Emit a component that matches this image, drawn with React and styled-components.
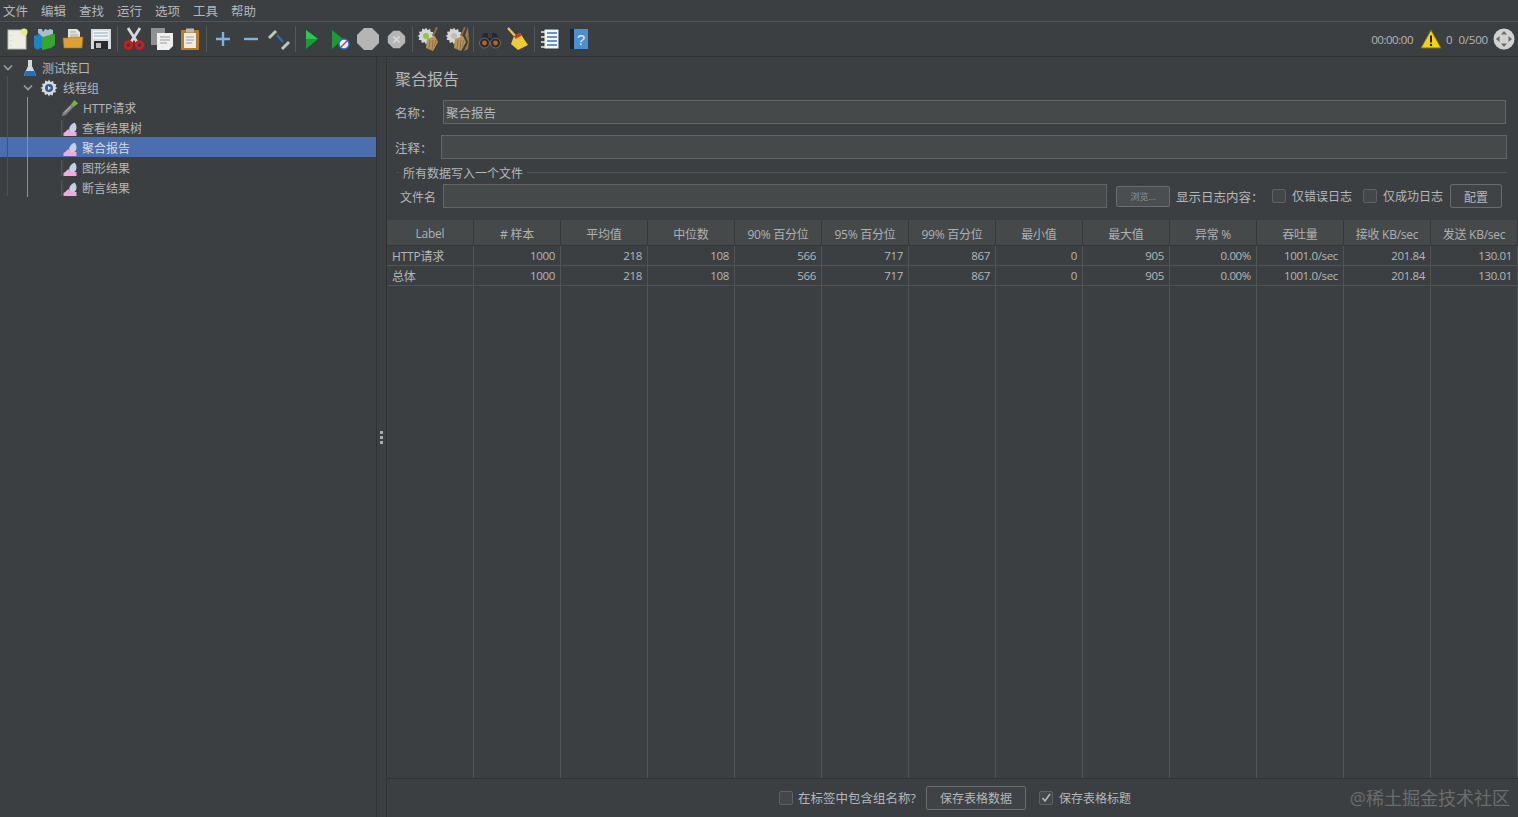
import React from "react";
import styled, { createGlobalStyle } from "styled-components";

const GlobalStyle = createGlobalStyle`
  html, body { margin: 0; padding: 0; height: 100%; background: #3c3f41; overflow: hidden; }
  #root { height: 100%; }
  * { box-sizing: border-box; }
`;

const FONT = `"Open Sans", "Noto Sans CJK SC", sans-serif`;

const Window = styled.div`
  height: 817px;
  display: flex;
  flex-direction: column;
  background: #3c3f41;
  color: #b4b7b9;
  font-family: ${FONT};
  font-size: 12px;
  position: relative;
  overflow: hidden;
`;

const MenuBar = styled.div`
  height: 22px;
  display: flex;
  align-items: center;
  gap: 13px;
  padding-left: 3px;
  font-size: 12.5px;
  border-bottom: 1px solid #515354;
`;

const ToolBar = styled.div`
  height: 35px;
  display: flex;
  align-items: center;
  padding: 0 3px;
  border-bottom: 1px solid #323232;
`;

const ToolButton = styled.div`
  width: 28px;
  height: 28px;
  display: flex;
  align-items: center;
  justify-content: center;
`;

const ToolSep = styled.div`
  width: 5px;
  height: 26px;
  display: flex;
  justify-content: center;
  &::before {
    content: "";
    width: 1px;
    background: #555759;
  }
`;

const Status = styled.div`
  margin-left: auto;
  display: flex;
  align-items: center;
  font-size: 11.5px;
`;

const StatusText = styled.span`
  display: flex;
  margin-left: ${(p) => p.$gap || 0}px;
  letter-spacing: ${(p) => p.$tight || -0.2}px;
`;

const Body = styled.div`
  flex: 1;
  display: flex;
  min-height: 0;
`;

const Tree = styled.div`
  width: 377px;
  position: relative;
  border-right: 1px solid #323232;
`;

const TreeRow = styled.div`
  height: 20px;
  display: flex;
  align-items: center;
  padding-top: 2px;
  padding-left: ${(p) => p.$indent}px;
  background: ${(p) => (p.$selected ? "#4b6eaf" : "transparent")};
  color: ${(p) => (p.$selected ? "#d6dbe4" : "#b4b7b9")};
  font-size: 12px;
`;

const Chevron = styled.svg`
  width: 10px;
  height: 8px;
  margin-right: 7px;
  flex: none;
`;

const TreeIcon = styled.span`
  width: 18px;
  height: 18px;
  margin-left: ${(p) => p.$shift || 0}px;
  margin-right: ${(p) => p.$gap}px;
  display: flex;
  align-items: center;
  justify-content: center;
  flex: none;
`;

const TreeGuide = styled.div`
  position: absolute;
  left: ${(p) => p.$left}px;
  top: ${(p) => p.$top}px;
  height: ${(p) => p.$height}px;
  width: 1px;
  background: ${(p) => p.$color};
`;

const Splitter = styled.div`
  width: 10px;
  display: flex;
  flex-direction: column;
  align-items: center;
  justify-content: center;
  gap: 2px;
  padding-right: 1px;
  border-right: 1px solid #323232;
`;

const SplitDot = styled.span`
  width: 3px;
  height: 3px;
  background: #a9abad;
`;

const Main = styled.div`
  flex: 1;
  min-width: 0;
  display: flex;
  flex-direction: column;
  padding-top: 10px;
`;

const Form = styled.div`
  padding: 0 11px 0 8px;
`;

const Title = styled.div`
  height: 24px;
  line-height: 24px;
  font-size: 16px;
`;

const FieldRow = styled.div`
  display: flex;
  align-items: center;
  height: 24px;
  margin-top: ${(p) => p.$top}px;
`;

const FieldLabel = styled.label`
  width: ${(p) => p.$width}px;
  padding-left: ${(p) => p.$pad || 0}px;
  padding-top: 1px;
  flex: none;
  font-size: ${(p) => p.$size || 12.5}px;
`;

const TextField = styled.div`
  flex: ${(p) => (p.$fixed ? "none" : 1)};
  width: ${(p) => (p.$fixed ? `${p.$fixed}px` : "auto")};
  height: 24px;
  margin-right: ${(p) => p.$right || 0}px;
  padding: 2px 0 0 2px;
  background: #45494a;
  border: 1px solid #646464;
  line-height: 22px;
  font-size: 12.5px;
`;

const Legend = styled.div`
  height: 25px;
  display: flex;
  align-items: center;
  gap: 4px;
  font-size: 12px;
  padding: 1px 0 0 2px;
  &::before {
    content: "";
    width: 2px;
    height: 1px;
    background: #515354;
  }
  &::after {
    content: "";
    flex: 1;
    height: 1px;
    background: #515354;
  }
`;

const LegendText = styled.span`
  padding-top: 2px;
`;

const Button = styled.div`
  width: ${(p) => p.$width}px;
  height: ${(p) => p.$height || 24}px;
  margin-left: ${(p) => p.$left || 0}px;
  padding-top: 1px;
  flex: none;
  display: flex;
  align-items: center;
  justify-content: center;
  border: 1px solid #6a6d6f;
  border-radius: 2px;
  background: ${(p) => p.$bg || "#3f4345"};
  color: ${(p) => p.$color || "#b4b7b9"};
  font-size: ${(p) => p.$size || 12}px;
`;

const CheckWrap = styled.span`
  display: inline-flex;
  align-items: center;
  margin-left: ${(p) => p.$left}px;
  font-size: ${(p) => p.$size || 12}px;
  white-space: nowrap;
`;

const CheckBox = styled.span`
  width: 14px;
  height: 14px;
  margin-right: ${(p) => p.$gap}px;
  border: 1px solid #5e6163;
  border-radius: 2px;
  background: #43474a;
  display: flex;
  align-items: center;
  justify-content: center;
  flex: none;
`;

const Grid = styled.div`
  flex: 1;
  min-height: 0;
  margin-top: 12px;
  display: grid;
  grid-template-columns: repeat(13, 87px);
  grid-template-rows: 26px 20px 20px 1fr;
  border-bottom: 1px solid #323232;
`;

const HeadCell = styled.div`
  display: flex;
  align-items: center;
  justify-content: center;
  padding-top: 2px;
  background: #45494a;
  border-right: 1px solid #35383a;
  border-bottom: 1px solid #35383a;
  font-size: 12px;
  letter-spacing: -0.25px;
  white-space: nowrap;
  color: #aeb1b3;
`;

const Cell = styled.div`
  display: flex;
  align-items: center;
  justify-content: ${(p) => (p.$left ? "flex-start" : "flex-end")};
  padding: 0 5px;
  border-right: 1px solid #515354;
  border-bottom: ${(p) => (p.$filler ? "none" : "1px solid #515354")};
  font-size: ${(p) => (p.$left ? 12 : 11.5)}px;
  letter-spacing: ${(p) => (p.$left ? -0.2 : -0.35)}px;
  white-space: nowrap;
`;

const BottomBar = styled.div`
  height: 38px;
  display: flex;
  align-items: center;
  justify-content: center;
  padding: 0 0 1px 5px;
`;

const Watermark = styled.div`
  position: absolute;
  right: 8px;
  bottom: 8px;
  font-size: 18px;
  line-height: 22px;
  color: #6a6c6e;
`;

const HEADERS = ["Label", "# 样本", "平均值", "中位数", "90% 百分位", "95% 百分位", "99% 百分位", "最小值", "最大值", "异常 %", "吞吐量", "接收 KB/sec", "发送 KB/sec"];
const VALUES = ["1000", "218", "108", "566", "717", "867", "0", "905", "0.00%", "1001.0/sec", "201.84", "130.01"];

/* toolbar drawings */
const Svg = ({ size = 24, children }) => (
  <svg width={size} height={size} viewBox="0 0 24 24">{children}</svg>
);

const GEAR = "M9 .5l1.500 2.400 2.700-.9.400 2.800 2.800.4-.9 2.700L17.500 9l-2.400 1.500.9 2.700-2.800.4-.4 2.800-2.700-.9L9 17.500l-1.500-2.400-2.700.9-.4-2.800-2.800-.4.9-2.700L.5 9l2.400-1.500-.9-2.700 2.800-.4.4-2.800 2.700.9z";

const NewIcon = () => (
  <Svg>
    <rect x="3" y="3" width="18" height="19" fill="#eeeee4" stroke="#bdbdb0" />
    <circle cx="19" cy="5" r="3.500" fill="#e6eb8c" />
    <path d="M6 8v1M6 13v1M6 18v1" stroke="#c4c4b8" />
  </Svg>
);
const TemplatesIcon = () => (
  <Svg>
    <path d="M1 9l9-3v14l-6 3-3-3z" fill="#1c83c8" />
    <path d="M9 9l13-2v11l-4 3-9 2z" fill="#37a62f" />
    <path d="M5 6V2h4l1 3 2-3 3 1 2-1 3 1v4l-10 3z" fill="#a7bfcb" />
  </Svg>
);
const OpenIcon = () => (
  <Svg>
    <path d="M7 2h9l3 3v10H7z" fill="#e2e2e2" />
    <path d="M9 5h6M9 8h8" stroke="#a9a9a9" />
    <path d="M2 11h6l1-1h13l-1 11H3z" fill="#e0a02f" stroke="#a9741a" strokeWidth=".6" />
  </Svg>
);
const SaveIcon = () => (
  <Svg>
    <path d="M2 2h20v20H2z" fill="#d5dae0" />
    <path d="M4 4h16v8H4z" fill="#f2f4f7" />
    <path d="M5 6h14M5 9h14" stroke="#8fa9c4" />
    <path d="M5 14h14v8H5z" fill="#2a2a2a" />
    <path d="M7 16h5v5H7z" fill="#bcbcbc" />
  </Svg>
);
const CutIcon = () => (
  <Svg>
    <path d="M6 1l9 14M18 1L9 15" stroke="#d5d7d9" strokeWidth="2.800" />
    <circle cx="6.500" cy="18" r="3.400" fill="none" stroke="#d11b1b" strokeWidth="2.800" />
    <circle cx="17.500" cy="18" r="3.400" fill="none" stroke="#d11b1b" strokeWidth="2.800" />
  </Svg>
);
const CopyIcon = () => (
  <Svg>
    <rect x="1" y="1" width="14" height="17" fill="#8f9193" />
    <path d="M7 6h16v13l-4 4H7z" fill="#efefef" />
    <path d="M10 10h10M10 13h10M10 16h7" stroke="#9a9a9a" />
  </Svg>
);
const PasteIcon = () => (
  <Svg>
    <rect x="3" y="3" width="18" height="20" rx="1" fill="#b97c26" />
    <rect x="6" y="6" width="12" height="15" fill="#ececec" />
    <rect x="8" y="1.500" width="8" height="4" fill="#b9b9b9" />
    <path d="M8 10h8M8 13h8M8 16h6" stroke="#a0a0a0" />
  </Svg>
);
const PlusIcon = () => (
  <Svg><path d="M12 5v14M5 12h14" stroke="#7fb2e0" strokeWidth="2.400" /></Svg>
);
const MinusIcon = () => (
  <Svg><path d="M5 12h14" stroke="#7fb2e0" strokeWidth="2.400" /></Svg>
);
const ToggleIcon = () => (
  <Svg>
    <path d="M2 11l7-7" stroke="#b9cbb7" strokeWidth="3" />
    <path d="M10 8l6 7" stroke="#2f6fb3" strokeWidth="2" />
    <path d="M15 22l7-7" stroke="#b9cbb7" strokeWidth="3" />
  </Svg>
);
const PlayIcon = () => (
  <Svg><path d="M6 3l12 9-12 10z" fill="#1a9c35" /><path d="M6 3l12 9H6z" fill="#2fc552" /></Svg>
);
const PlayNoPauseIcon = () => (
  <Svg>
    <path d="M4 3l11 9-11 10z" fill="#1a9c35" />
    <circle cx="16" cy="17" r="5" fill="#e8eef6" stroke="#2c6cc0" strokeWidth="1.400" />
    <path d="M13 20l6-6" stroke="#d03a2a" strokeWidth="1.400" />
  </Svg>
);
const Octagon = "M8 1h8l7 7v8l-7 7H8l-7-7V8z";
const StopIcon = () => (
  <Svg><path d={Octagon} fill="#b5b5b5" /></Svg>
);
const ShutdownIcon = () => (
  <Svg size={19}>
    <path d={Octagon} fill="#b5b5b5" />
    <path d="M8 8l8 8M16 8l-8 8" stroke="#d6d6d6" strokeWidth="2.400" />
  </Svg>
);
const BroomGear = ({ double }) => (
  <Svg>
    <path d={GEAR} fill="#d6d6d6" />
    <circle cx="9" cy="9" r="3" fill={double ? "#bdbdbd" : "#8ec63f"} />
    {double && <path d="M23 0l-3 8 3 7-4 9 4-2 1-8z" fill="#9c7a46" />}
    <path d="M20 0l-4 9" stroke="#8a6a3a" strokeWidth="2" />
    <path d="M10 12l8-3 3 6-5 9-7-3z" fill="#b8935a" />
    <path d="M13 13l-1 9M16 13l-1 10M19 13l-2 7" stroke="#8a6a3a" strokeWidth=".8" />
  </Svg>
);
const BinocularsIcon = () => (
  <Svg>
    <path d="M6 6h4v5h4V6h4l5 10H1z" fill="#26272a" />
    <circle cx="6.500" cy="16" r="5" fill="#2a2a2a" stroke="#6c6c6c" />
    <circle cx="17.500" cy="16" r="5" fill="#2a2a2a" stroke="#6c6c6c" />
    <circle cx="6.500" cy="16" r="2.400" fill="#b8622e" />
    <circle cx="17.500" cy="16" r="2.400" fill="#b8622e" />
  </Svg>
);
const BroomIcon = () => (
  <Svg>
    <path d="M2 1l8 9" stroke="#e5c64d" strokeWidth="2.400" />
    <path d="M8 9l6-3 8 12-10 5-7-6z" fill="#eecb3a" />
    <path d="M8 9l6-3 1.500 2.500-6 3.500z" fill="#c8342b" />
  </Svg>
);
const ListIcon = () => (
  <Svg>
    <rect x="5" y="2" width="15" height="20" fill="#f2f4f6" stroke="#30343a" />
    <path d="M8 6h10M8 10h10M8 14h10M8 18h10" stroke="#3e73b8" strokeWidth="1.400" />
    <path d="M2 5h5M2 10h5M2 15h5M2 20h5" stroke="#e9e9e9" strokeWidth="1.600" />
  </Svg>
);
const HelpIcon = () => (
  <Svg>
    <rect x="3" y="2" width="5" height="20" fill="#1b2430" />
    <rect x="7" y="2" width="14" height="20" fill="#4e8fd0" />
    <text x="14" y="18" fontSize="15" textAnchor="middle" fill="#e4eef8" fontFamily="Liberation Sans, sans-serif">?</text>
  </Svg>
);
const WarningIcon = () => (
  <svg width="22" height="20" viewBox="0 0 22 20">
    <path d="M11 1l10 18H1z" fill="#f4d411" stroke="#77701a" />
    <path d="M11 6.500v7" stroke="#222" strokeWidth="2" />
    <circle cx="11" cy="16" r="1.200" fill="#222" />
  </svg>
);
const GlobeIcon = () => (
  <svg width="22" height="22" viewBox="0 0 22 22">
    <circle cx="11" cy="11" r="10.500" fill="#d2d2d2" />
    <path d="M11 3l3 3.500H8zM11 19l3-3.500H8zM3 11l3.500-3v6zM19 11l-3.500-3v6z" fill="#666a6c" />
  </svg>
);

/* tree drawings */
const FlaskIcon = () => (
  <svg width="14" height="18" viewBox="0 0 14 18">
    <path d="M5 1h4v6l4 9a1 1 0 01-1 1H2a1 1 0 01-1-1l4-9z" fill="#d5d9de" />
    <path d="M3 12h8l2 4a1 1 0 01-1 1H2a1 1 0 01-1-1z" fill="#1f6fc4" />
  </svg>
);
const GearIcon = () => (
  <svg width="18" height="18" viewBox="0 0 18 18">
    <path d={GEAR} fill="#d8dadc" />
    <circle cx="9" cy="9" r="4" fill="#3a5a9a" />
    <path d="M8 7l3 2-3 2z" fill="#d8e4f4" />
  </svg>
);
const PipetteIcon = () => (
  <svg width="20" height="20" viewBox="0 0 20 20">
    <path d="M1 19l1-4 9-9 3 3-9 9z" fill="#7f8385" />
    <path d="M4 15l7-7" stroke="#b9bcbe" />
    <path d="M11 6l4-5 4 4-5 4z" fill="#6fb840" />
  </svg>
);
const ListenerIcon = ({ selected }) => (
  <svg width="18" height="18" viewBox="0 0 18 18">
    {!selected && <path d="M.8 1v16" stroke="#5c5f61" />}
    <path d="M2.500 17v-3c2-.5 3-3 5-4 1 2 3 3 8 3v4z" fill="#f0a9dc" />
    <path d="M13.500 3.500c2 2 2.500 5 1.500 7.500s-4 3-6 1-.5-6 4.500-8.500z" fill="#c3d0e6" />
  </svg>
);

const TOOLBAR = [
  [NewIcon, TemplatesIcon, OpenIcon, SaveIcon],
  [CutIcon, CopyIcon, PasteIcon],
  [PlusIcon, MinusIcon, ToggleIcon],
  [PlayIcon, PlayNoPauseIcon, StopIcon, ShutdownIcon],
  [() => <BroomGear />, () => <BroomGear double />],
  [BinocularsIcon, BroomIcon],
  [ListIcon, HelpIcon],
];

const MENUS = ["文件", "编辑", "查找", "运行", "选项", "工具", "帮助"];

const TREE = [
  { name: "测试接口", indent: 3, open: true, icon: <FlaskIcon />, shift: 1, gap: 3 },
  { name: "线程组", indent: 23, open: true, icon: <GearIcon />, gap: 5 },
  { name: "HTTP请求", indent: 61, icon: <PipetteIcon />, gap: 4 },
  { name: "查看结果树", indent: 61, icon: <ListenerIcon />, gap: 3 },
  { name: "聚合报告", indent: 61, icon: <ListenerIcon selected />, gap: 3, selected: true },
  { name: "图形结果", indent: 61, icon: <ListenerIcon />, gap: 3 },
  { name: "断言结果", indent: 61, icon: <ListenerIcon />, gap: 3 },
];

const Tick = () => (
  <svg width="10" height="10" viewBox="0 0 10 10">
    <path d="M1.500 5l2.500 3 5-7" fill="none" stroke="#b4b7b9" strokeWidth="1.600" />
  </svg>
);

export default function App() {
  return (
    <Window>
      <GlobalStyle />
      <MenuBar>
        {MENUS.map((m) => <span key={m}>{m}</span>)}
      </MenuBar>
      <ToolBar>
        {TOOLBAR.map((group, i) => (
          <React.Fragment key={i}>
            {i > 0 && <ToolSep />}
            {group.map((Icon, j) => <ToolButton key={j}><Icon /></ToolButton>)}
          </React.Fragment>
        ))}
        <Status>
          <StatusText $tight={-0.45}>00:00:00</StatusText>
          <StatusText $gap={7}><WarningIcon /></StatusText>
          <StatusText $gap={4}>0</StatusText>
          <StatusText $gap={6}>0/500</StatusText>
          <StatusText $gap={5}><GlobeIcon /></StatusText>
        </Status>
      </ToolBar>
      <Body>
        <Tree>
          <TreeGuide $left={7} $top={19} $height={120} $color="#4f5254" />
          <TreeGuide $left={27} $top={40} $height={100} $color="#5a9fd8" />
          {TREE.map((node) => (
            <TreeRow key={node.name} $indent={node.indent} $selected={node.selected}>
              {node.open && (
                <Chevron viewBox="0 0 10 8">
                  <path d="M1 1.500l4 4 4-4" fill="none" stroke="#9a9da0" strokeWidth="1.600" />
                </Chevron>
              )}
              <TreeIcon $shift={node.shift} $gap={node.gap}>{node.icon}</TreeIcon>
              {node.name}
            </TreeRow>
          ))}
        </Tree>
        <Splitter>
          <SplitDot /><SplitDot /><SplitDot />
        </Splitter>
        <Main>
          <Form>
            <Title>聚合报告</Title>
            <FieldRow $top={9}>
              <FieldLabel $width={48}>名称：</FieldLabel>
              <TextField $right={1}>聚合报告</TextField>
            </FieldRow>
            <FieldRow $top={11}>
              <FieldLabel $width={46}>注释：</FieldLabel>
              <TextField />
            </FieldRow>
            <Legend><LegendText>所有数据写入一个文件</LegendText></Legend>
            <FieldRow $top={0}>
              <FieldLabel $width={48} $pad={5} $size={12}>文件名</FieldLabel>
              <TextField $fixed={664} $right={9} />
              <Button $width={54} $height={21} $size={9} $bg="#4a4e50" $color="#8f9294">浏览...</Button>
              <FieldLabel $width={102} $pad={6}>显示日志内容：</FieldLabel>
              <CheckWrap $left={0}><CheckBox $gap={6} />仅错误日志</CheckWrap>
              <CheckWrap $left={11}><CheckBox $gap={6} />仅成功日志</CheckWrap>
              <Button $width={52} $left={7}>配置</Button>
            </FieldRow>
          </Form>
          <Grid>
            {HEADERS.map((h) => <HeadCell key={h}>{h}</HeadCell>)}
            {["HTTP请求", "总体"].map((label) => (
              <React.Fragment key={label}>
                <Cell $left>{label}</Cell>
                {VALUES.map((v, i) => <Cell key={i}>{v}</Cell>)}
              </React.Fragment>
            ))}
            {HEADERS.map((h) => <Cell key={h} $filler />)}
          </Grid>
          <BottomBar>
            <CheckWrap $left={0} $size={12.5}><CheckBox $gap={5} />在标签中包含组名称?</CheckWrap>
            <Button $width={100} $left={10}>保存表格数据</Button>
            <CheckWrap $left={13}><CheckBox $gap={6}><Tick /></CheckBox>保存表格标题</CheckWrap>
          </BottomBar>
        </Main>
      </Body>
      <Watermark>@稀土掘金技术社区</Watermark>
    </Window>
  );
}
